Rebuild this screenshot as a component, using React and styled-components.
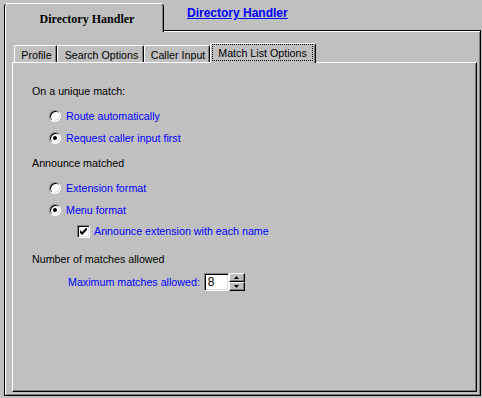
import React from 'react';
import styled, { createGlobalStyle } from 'styled-components';

const GlobalStyle = createGlobalStyle`
  body {
    margin: 0;
    background: #c0c0c0;
    font-family: "Liberation Sans", Arial, sans-serif;
  }
`;

const Page = styled.div`
  width: 482px;
  height: 398px;
  box-sizing: border-box;
  padding-top: 3px;
  display: flex;
  flex-direction: column;
  background: #c0c0c0;
  overflow: hidden;
`;

const Header = styled.div`
  height: 27px;
  display: flex;
  align-items: flex-start;
`;

const TopTab = styled.div`
  position: relative;
  z-index: 2;
  margin-left: 4px;
  width: 160px;
  height: 29px;
  box-sizing: border-box;
  background: #c0c0c0;
  border-top: 1px solid #fff;
  border-left: 1px solid #000;
  border-right: 1px solid #000;
  border-radius: 4px 4px 0 0;
  box-shadow: inset 1px 0 0 #fff, inset -1px 0 0 #808080;
  display: flex;
  justify-content: center;
  padding: 8px 0 0 6px;
  font-family: "Liberation Serif", "Times New Roman", serif;
  font-weight: bold;
  font-size: 12px;
  color: #000;
`;

const HeaderLink = styled.a`
  margin: 3px 0 0 23px;
  font-size: 12px;
  font-weight: bold;
  color: #0000ff;
  text-decoration: underline;
`;

const OuterPanel = styled.div`
  flex: 1;
  margin: 0 1px 2px 4px;
  border: 1px solid #000;
  box-shadow: inset 1px 1px 0 #fff, inset -1px -1px 0 #808080;
  padding: 12px 3px 3px 7px;
  display: flex;
  flex-direction: column;
`;

const TabRow = styled.div`
  height: 19px;
  padding-left: 2px;
  display: flex;
  align-items: flex-end;
`;

const Tab = styled.div`
  position: relative;
  z-index: ${(p) => (p.$active ? 1 : 0)};
  width: ${(p) => p.$w}px;
  height: ${(p) => (p.$active ? 20 : 17)}px;
  margin-bottom: ${(p) => (p.$active ? -1 : 0)}px;
  box-sizing: border-box;
  background: #c0c0c0;
  border-top: 1px solid #fff;
  border-left: 1px solid #fff;
  border-right: 1px solid #000;
  border-radius: 2px 2px 0 0;
  box-shadow: inset -1px 0 0 #808080;
  display: flex;
  align-items: center;
  justify-content: center;
  padding: ${(p) => (p.$active ? '0 2px 2px 1px' : '1px 0 0 2px')};
  font-size: 10.7px;
  color: #000;
`;

const Focus = styled.span`
  flex: 1;
  align-self: stretch;
  display: flex;
  align-items: center;
  justify-content: center;
  border: 1px dotted #000;
`;

const InnerPanel = styled.div`
  flex: 1;
  border-top: 1px solid #fff;
  border-left: 1px solid #fff;
  border-right: 1px solid #000;
  border-bottom: 1px solid #000;
  box-shadow: inset -1px -1px 0 #808080;
  padding: 21px 0 0 19px;
  display: flex;
  flex-direction: column;
`;

const Row = styled.div`
  display: flex;
  align-items: center;
  height: ${(p) => p.$h || 14}px;
  margin-top: ${(p) => p.$mt || 0}px;
  padding-left: ${(p) => p.$indent || 0}px;
  font-size: 10.7px;
  color: ${(p) => (p.$blue ? '#0000ff' : '#000')};
  white-space: nowrap;
`;

const Radio = styled.span`
  position: relative;
  width: 12px;
  height: 12px;
  box-sizing: border-box;
  border-radius: 50%;
  border: 1px solid;
  border-color: #808080 #fff #fff #808080;
  box-shadow: inset 1px 1px 0 #000, inset -1px -1px 0 #dfdfdf;
  background: #fff;
  margin-right: 5px;
  flex-shrink: 0;

  &::after {
    content: '';
    display: ${(p) => (p.$checked ? 'block' : 'none')};
    position: absolute;
    left: 3px;
    top: 3px;
    width: 4px;
    height: 4px;
    border-radius: 50%;
    background: #000;
  }
`;

const Check = styled.span`
  width: 13px;
  height: 13px;
  box-sizing: border-box;
  border: 1px solid;
  border-color: #808080 #fff #fff #808080;
  box-shadow: inset 1px 1px 0 #000, inset -1px -1px 0 #dfdfdf;
  background: #fff;
  margin-right: 4px;
  display: flex;
  align-items: center;
  justify-content: center;
  flex-shrink: 0;
`;

const SpinField = styled.div`
  display: flex;
  margin-left: 4px;
`;

const NumberBox = styled.div`
  width: 25px;
  height: 18px;
  box-sizing: border-box;
  border: 1px solid;
  border-color: #808080 #fff #fff #808080;
  box-shadow: inset 1px 1px 0 #000, inset -1px -1px 0 #dfdfdf;
  background: #fff;
  padding: 0 0 0 3px;
  display: flex;
  align-items: center;
  font-size: 12px;
  color: #000;
`;

const SpinButtons = styled.div`
  display: flex;
  flex-direction: column;
  width: 16px;
  height: 18px;
`;

const SpinButton = styled.div`
  flex: 1;
  box-sizing: border-box;
  background: #c0c0c0;
  border: 1px solid;
  border-color: #fff #000 #000 #fff;
  box-shadow: inset -1px -1px 0 #808080;
  display: flex;
  align-items: center;
  justify-content: center;
`;

const Arrow = ({ up }) => (
  <svg width="5" height="3" viewBox="0 0 5 3">
    <path d={up ? 'M2.5 0 L5 3 L0 3 Z' : 'M0 0 L5 0 L2.5 3 Z'} fill="#000" />
  </svg>
);

const tabs = [
  { label: 'Profile', w: 43 },
  { label: 'Search Options', w: 87 },
  { label: 'Caller Input', w: 66 },
  { label: 'Match List Options', w: 106, active: true },
];

export default function App() {
  return (
    <Page>
      <GlobalStyle />
      <Header>
        <TopTab>Directory Handler</TopTab>
        <HeaderLink>Directory Handler</HeaderLink>
      </Header>
      <OuterPanel>
        <TabRow>
          {tabs.map((t) => (
            <Tab key={t.label} $w={t.w} $active={t.active}>
              {t.active ? <Focus>{t.label}</Focus> : t.label}
            </Tab>
          ))}
        </TabRow>
        <InnerPanel>
          <Row>On a unique match:</Row>
          <Row $mt={11} $indent={17} $blue>
            <Radio />
            Route automatically
          </Row>
          <Row $mt={8} $indent={17} $blue>
            <Radio $checked />
            Request caller input first
          </Row>
          <Row $mt={11}>Announce matched</Row>
          <Row $mt={11} $indent={17} $blue>
            <Radio />
            Extension format
          </Row>
          <Row $mt={8} $indent={17} $blue>
            <Radio $checked />
            Menu format
          </Row>
          <Row $mt={7} $indent={45} $blue>
            <Check>
              <svg width="7" height="7" viewBox="0 0 7 7">
                <path d="M0 2 L2 4 L7 -1 L7 2 L2 7 L0 5 Z" fill="#000" />
              </svg>
            </Check>
            Announce extension with each name
          </Row>
          <Row $mt={14}>Number of matches allowed</Row>
          <Row $mt={7} $h={18} $indent={36} $blue>
            Maximum matches allowed:
            <SpinField>
              <NumberBox>8</NumberBox>
              <SpinButtons>
                <SpinButton>
                  <Arrow up />
                </SpinButton>
                <SpinButton>
                  <Arrow />
                </SpinButton>
              </SpinButtons>
            </SpinField>
          </Row>
        </InnerPanel>
      </OuterPanel>
    </Page>
  );
}
